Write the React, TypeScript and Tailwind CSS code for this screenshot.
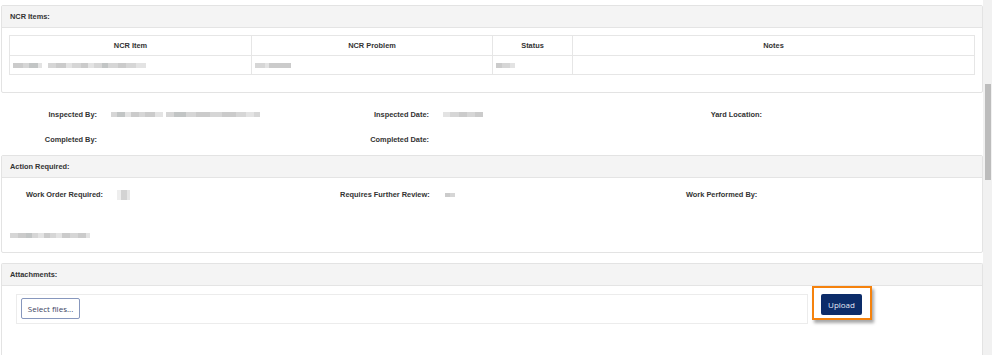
import React from "react";

type Seg = [number, string];

function Redact({ segs, h = 5 }: { segs: Seg[]; h?: number }) {
  return (
    <div className="flex items-center">
      {segs.map(([w, c], i) => (
        <div key={i} style={{ width: w, height: h, background: c }} />
      ))}
    </div>
  );
}

const g1 = "#cbcbcb";
const g2 = "#d6d6d6";
const g3 = "#c2c5c5";
const g4 = "#e3e3e3";
const gw = "#ffffff";

function Label({ children, w }: { children: React.ReactNode; w: string }) {
  return (
    <div className={`${w} shrink-0 text-right font-bold text-[7.4px] text-[#333]`}>
      {children}
    </div>
  );
}

function PanelHeader({ children }: { children: React.ReactNode }) {
  return (
    <div className="h-[22px] bg-[#f4f4f4] border-b border-[#e4e4e4] pl-[8px] flex items-center font-bold text-[7.4px] text-[#333]">
      {children}
    </div>
  );
}

export default function App() {
  return (
    <div
      className="w-[1000px] h-[355px] overflow-hidden bg-white flex"
      style={{ fontFamily: '"Liberation Sans", Arial, sans-serif' }}
    >
      <div className="w-[983px] shrink-0 flex flex-col pt-[5px]">
        {/* NCR Items panel */}
        <div className="ml-px w-[982px] border border-[#e3e3e3] rounded-[2px]">
          <PanelHeader>NCR Items:</PanelHeader>
          <div className="px-[7px] pt-[7px] pb-[17px]">
            <table className="w-full border-collapse table-fixed text-[7.4px] text-[#333]">
              <colgroup>
                <col className="w-[242px]" />
                <col className="w-[241px]" />
                <col className="w-[80px]" />
                <col />
              </colgroup>
              <thead>
                <tr className="h-[20px]">
                  <th className="border border-[#e6e6e6] font-bold text-center">NCR Item</th>
                  <th className="border border-[#e6e6e6] font-bold text-center">NCR Problem</th>
                  <th className="border border-[#e6e6e6] font-bold text-center">Status</th>
                  <th className="border border-[#e6e6e6] font-bold text-center">Notes</th>
                </tr>
              </thead>
              <tbody>
                <tr className="h-[19px]">
                  <td className="border border-[#e6e6e6] pl-[3px]">
                    <Redact
                      segs={[
                        [10, g1], [6, g2], [9, g3], [4, g4], [6, gw], [8, g2], [10, g1], [6, g4],
                        [9, g2], [7, g1], [6, g4], [8, g2], [6, g3], [10, g2], [8, g1], [10, g2], [10, g4],
                      ]}
                    />
                  </td>
                  <td className="border border-[#e6e6e6] pl-[3px]">
                    <Redact segs={[[10, g2], [4, g4], [22, g1]]} />
                  </td>
                  <td className="border border-[#e6e6e6] pl-[3px]">
                    <Redact segs={[[6, g1], [8, g2], [5, g4]]} />
                  </td>
                  <td className="border border-[#e6e6e6]"></td>
                </tr>
              </tbody>
            </table>
          </div>
        </div>

        {/* Inspection info */}
        <div className="pt-[9px] pb-[3px]">
          <div className="grid grid-cols-[332px_333px_1fr] h-[25px] items-center">
            <div className="flex items-center">
              <Label w="w-[97px]">Inspected By:</Label>
              <div className="ml-[14px]">
                <Redact
                  segs={[
                    [6, g2], [8, g3], [6, g4], [8, g1], [6, g2], [10, g1], [8, g4], [3, gw],
                    [8, g2], [12, g3], [10, g2], [14, g1], [12, g2], [14, g1], [10, g2], [8, g4], [6, g2],
                  ]}
                />
              </div>
            </div>
            <div className="flex items-center">
              <Label w="w-[97px]">Inspected Date:</Label>
              <div className="ml-[14px]">
                <Redact segs={[[7, g4], [9, g2], [8, g1], [8, g2], [8, g1]]} />
              </div>
            </div>
            <div className="flex items-center">
              <Label w="w-[97px]">Yard Location:</Label>
            </div>
          </div>
          <div className="grid grid-cols-[332px_333px_1fr] h-[25px] items-center">
            <div className="flex items-center">
              <Label w="w-[97px]">Completed By:</Label>
            </div>
            <div className="flex items-center">
              <Label w="w-[97px]">Completed Date:</Label>
            </div>
            <div />
          </div>
        </div>

        {/* Action Required panel */}
        <div className="ml-px w-[982px] border border-[#e3e3e3] rounded-[2px]">
          <PanelHeader>Action Required:</PanelHeader>
          <div className="pt-[5px] pb-[14px]">
            <div className="grid grid-cols-3 h-[24px] items-center">
              <div className="flex items-center">
                <Label w="w-[101px]">Work Order Required:</Label>
                <div className="ml-[14px]">
                  <Redact h={10} segs={[[4, "#eeeeee"], [6, "#d3d3d3"], [3, "#e6e6e6"]]} />
                </div>
              </div>
              <div className="flex items-center">
                <Label w="w-[101px]">Requires Further Review:</Label>
                <div className="ml-[15px]">
                  <Redact segs={[[5, g1], [5, g2]]} h={4} />
                </div>
              </div>
              <div className="flex items-center">
                <Label w="w-[102px]">Work Performed By:</Label>
              </div>
            </div>
            <div className="pl-[8px] mt-[26px]">
              <Redact
                segs={[
                  [8, g2], [8, g1], [6, g3], [6, g2], [6, g4], [6, g1], [6, g2], [6, g4],
                  [8, g1], [8, g2], [8, g1], [4, g4],
                ]}
              />
            </div>
          </div>
        </div>

        {/* Attachments panel */}
        <div className="ml-px mt-[10px] w-[982px] flex-1 border border-[#e3e3e3] border-b-0 rounded-t-[2px]">
          <PanelHeader>Attachments:</PanelHeader>
          <div className="pt-[8px] pl-[14px] flex items-start">
            <div className="w-[792px] border border-[#ececec] pt-[3px] pb-[4px] pl-[4px]">
              <button
                className="h-[21px] w-[59px] rounded-[2px] border border-[#8797bd] bg-white text-[8px] text-[#3b4262] flex items-center justify-center"
                style={{ fontFamily: '"Open Sans", "Liberation Sans", sans-serif' }}
              >
                Select files...
              </button>
            </div>
            <div className="relative ml-[13px]">
              <button
                className="h-[21px] w-[41px] rounded-[2px] bg-[#0c2c69] text-[8px] text-[#e4eaf6] flex items-center justify-center"
                style={{ fontFamily: '"Open Sans", "Liberation Sans", sans-serif' }}
              >
                Upload
              </button>
              <div className="absolute -left-[9px] -top-[8px] w-[60px] h-[34px] border-2 border-[#f5820d] shadow-[2px_3px_3px_rgba(0,0,0,0.35)] pointer-events-none" />
            </div>
          </div>
        </div>
      </div>

      {/* Scrollbar */}
      <div className="w-[9px] shrink-0 h-full bg-[#f1f1f1] flex justify-center">
        <div className="mt-[84px] w-[6px] h-[96px] bg-[#bcbcbc]" />
      </div>
      <div className="flex-1 bg-white" />
    </div>
  );
}
